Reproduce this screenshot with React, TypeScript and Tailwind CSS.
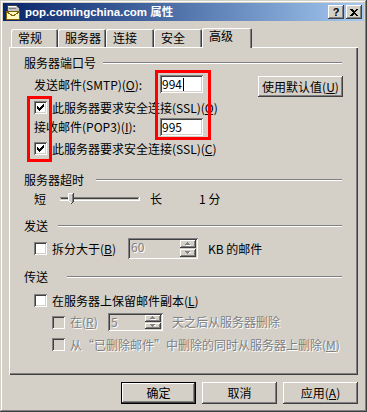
import React from 'react';

const raised =
  'shadow-[inset_-1px_-1px_#404040,inset_1px_1px_#ffffff,inset_-2px_-2px_#808080,inset_2px_2px_#d4d0c8]';
const sunken =
  'shadow-[inset_1px_1px_#808080,inset_-1px_-1px_#ffffff,inset_2px_2px_#404040,inset_-2px_-2px_#d4d0c8]';
const defaultRaised =
  'shadow-[inset_0_0_0_1px_#000000,inset_-2px_-2px_#404040,inset_2px_2px_#ffffff,inset_-3px_-3px_#808080]';
const grayText = 'text-[#808080] [text-shadow:1px_1px_0_#ffffff]';

// classic 7x7 check mark, row by row
const checkRows: [number, number, number][] = [
  [6, 0, 1],
  [5, 1, 2],
  [0, 2, 1],
  [4, 2, 3],
  [0, 3, 2],
  [3, 3, 3],
  [0, 4, 5],
  [1, 5, 3],
  [2, 6, 1],
];

function CheckBox({ checked = false, disabled = false }: { checked?: boolean; disabled?: boolean }) {
  return (
    <span
      className={`flex h-[13px] w-[13px] shrink-0 items-center justify-center ${
        disabled ? 'bg-[#d4d0c8]' : 'bg-white'
      } ${sunken}`}
    >
      {checked && (
        <svg width="7" height="7" viewBox="0 0 7 7" shapeRendering="crispEdges">
          {checkRows.map(([x, y, w], i) => (
            <rect key={i} x={x} y={y} width={w} height={1} fill="#000" />
          ))}
        </svg>
      )}
    </span>
  );
}

function Group({ title, className, line }: { title: string; className: string; line: string }) {
  return (
    <div className={`flex h-[12px] items-center ${className}`}>
      <span className="leading-[12px]">{title}</span>
      <div className={`h-[2px] flex-1 border-t border-b border-t-[#808080] border-b-white ${line}`} />
    </div>
  );
}

function Arrow({ down = false }: { down?: boolean }) {
  return (
    <svg width="6" height="4" viewBox="0 0 6 4" shapeRendering="crispEdges">
      {down ? (
        <>
          <rect x="1" y="1" width="5" height="1" fill="#fff" />
          <rect x="0" y="0" width="5" height="1" fill="#808080" />
          <rect x="1" y="1" width="3" height="1" fill="#808080" />
          <rect x="2" y="2" width="1" height="1" fill="#808080" />
        </>
      ) : (
        <>
          <rect x="2" y="0" width="1" height="1" fill="#808080" />
          <rect x="1" y="1" width="3" height="1" fill="#808080" />
          <rect x="0" y="2" width="5" height="1" fill="#808080" />
          <rect x="1" y="3" width="5" height="1" fill="#fff" />
        </>
      )}
    </svg>
  );
}

function Spin({ value, className }: { value: string; className: string }) {
  return (
    <div className={`flex shrink-0 bg-[#d4d0c8] p-[2px] ${sunken} ${className}`}>
      <span className={`flex-1 pl-[1px] leading-[14px] ${grayText}`}>{value}</span>
      <div className="flex w-[16px] flex-col gap-[1px]">
        <div className={`flex flex-1 items-center justify-center ${raised}`}>
          <Arrow />
        </div>
        <div className={`flex flex-1 items-center justify-center ${raised}`}>
          <Arrow down />
        </div>
      </div>
    </div>
  );
}

function Field({ children }: { children: React.ReactNode }) {
  return (
    <div className={`flex h-[18px] w-[43px] shrink-0 items-center bg-white pl-[2px] ${sunken}`}>
      <span className="leading-[12px]">{children}</span>
    </div>
  );
}

function Btn({
  children,
  className,
  isDefault = false,
}: {
  children: React.ReactNode;
  className: string;
  isDefault?: boolean;
}) {
  return (
    <div
      className={`flex shrink-0 items-center justify-center leading-[12px] ${
        isDefault ? defaultRaised : raised
      } ${className}`}
    >
      {children}
    </div>
  );
}

const tabs = ['常规', '服务器', '连接', '安全'];
const tabWidths = ['w-[47px]', 'w-[48px]', 'w-[48px]', 'w-[48px]'];

export default function App() {
  return (
    <div className="h-[412px] w-[367px] overflow-hidden bg-[#d4d0c8] p-[3px] text-[12px] text-black font-['Noto_Sans_CJK_SC',sans-serif] shadow-[inset_-1px_-1px_#404040,inset_1px_1px_#d4d0c8,inset_-2px_-2px_#808080,inset_2px_2px_#ffffff]">
      {/* title bar */}
      <div className="flex h-[18px] items-center bg-linear-to-r from-[#0a246a] to-[#a6caf0] pl-[2px] pr-[2px]">
        <svg width="16" height="16" viewBox="0 0 16 16" shapeRendering="crispEdges">
          <path d="M2 1h9l3 3v3H2z" fill="#c0c0c0" stroke="#404040" strokeWidth="1" />
          <rect x="3" y="2" width="8" height="1" fill="#fff" />
          <rect x="4" y="4" width="7" height="1" fill="#808080" />
          <rect x="1.5" y="7.5" width="13" height="8" fill="#fff8c0" stroke="#806000" />
          <path d="M2 8l6 4 6-4" fill="none" stroke="#806000" strokeWidth="1" />
        </svg>
        <span className="ml-[4px] text-[11.5px] font-bold leading-[14px] text-white font-['Liberation_Sans','Noto_Sans_CJK_SC',sans-serif]">
          pop.comingchina.com 属性
        </span>
        <div className="ml-auto flex gap-[2px]">
          <div className={`flex h-[14px] w-[16px] items-center justify-center bg-[#d4d0c8] ${raised}`}>
            <span className="text-[11px] font-bold leading-[11px] font-['Liberation_Sans',sans-serif]">?</span>
          </div>
          <div className={`flex h-[14px] w-[16px] items-center justify-center bg-[#d4d0c8] ${raised}`}>
            <svg width="8" height="7" viewBox="0 0 8 7" shapeRendering="crispEdges">
              <path d="M0 0h2l2 2 2-2h2L5 3.5 8 7H6L4 5 2 7H0l3-3.5z" fill="#000" />
            </svg>
          </div>
        </div>
      </div>

      <div className="px-[6px]">
        {/* tabs */}
        <div className="relative z-10 mt-[7px] flex h-[20px] items-end pl-[2px]">
          {tabs.map((t, i) => (
            <div
              key={t}
              className={`mb-[1px] h-[18px] rounded-t-[2px] pl-[7px] pt-[3px] leading-[12px] shadow-[inset_1px_1px_#ffffff,inset_-1px_0_#404040,inset_-2px_0_#808080] ${tabWidths[i]}`}
            >
              {t}
            </div>
          ))}
          <div className="h-[20px] w-[50px] rounded-t-[2px] bg-[#d4d0c8] pl-[7px] pt-[2px] leading-[12px] shadow-[inset_1px_1px_#ffffff,inset_-1px_0_#404040,inset_-2px_0_#808080]">
            高级
          </div>
        </div>

        {/* panel */}
        <div className="relative -mt-[1px] flex h-[328px] flex-col pl-[15px] pr-[16px] shadow-[inset_1px_1px_#ffffff,inset_-1px_-1px_#404040,inset_-2px_-2px_#808080]">
          <Group className="mt-[10px]" title="服务器端口号" line="ml-[7px]" />

          <div className="mt-[6px] flex h-[22px] items-start pl-[10px]">
            <span className="w-[126px] shrink-0 leading-[20px]">
              发送邮件(SMTP)(<u>O</u>):
            </span>
            <Field>
              994<span className="ml-[1px] inline-block h-[13px] w-[1px] align-[-2px] bg-black" />
            </Field>
            <Btn className="ml-[55px] mt-[1px] h-[21px] w-[85px]">
              使用默认值(<u>U</u>)
            </Btn>
          </div>

          <div className="mt-[4px] flex h-[13px] items-center pl-[10px]">
            <CheckBox checked />
            <span className="ml-[5px] leading-[12px]">
              此服务器要求安全连接(SSL)(<u>Q</u>)
            </span>
          </div>

          <div className="mt-[4px] flex h-[18px] items-start pl-[10px]">
            <span className="w-[126px] shrink-0 leading-[18px]">
              接收邮件(POP3)(<u>I</u>):
            </span>
            <Field>995</Field>
          </div>

          <div className="mt-[6px] flex h-[13px] items-center pl-[10px]">
            <CheckBox checked />
            <span className="ml-[5px] leading-[12px]">
              此服务器要求安全连接(SSL)(<u>C</u>)
            </span>
          </div>

          <Group className="mt-[19px]" title="服务器超时" line="ml-[12px]" />

          <div className="mt-[6px] flex h-[14px] items-center pl-[10px]">
            <span className="leading-[12px]">短</span>
            <svg className="ml-[14px]" width="80" height="14" viewBox="0 0 80 14" shapeRendering="crispEdges">
              <rect x="0" y="5" width="79" height="1" fill="#808080" />
              <rect x="1" y="6" width="77" height="1" fill="#404040" />
              <rect x="0" y="8" width="80" height="1" fill="#ffffff" />
              <rect x="79" y="5" width="1" height="4" fill="#ffffff" />
              <rect x="1" y="7" width="78" height="1" fill="#d4d0c8" />
              <path d="M8 1h6v8l-3 3-3-3z" fill="#d4d0c8" />
              <rect x="8" y="1" width="5" height="1" fill="#ffffff" />
              <rect x="8" y="1" width="1" height="8" fill="#ffffff" />
              <rect x="13" y="1" width="1" height="9" fill="#404040" />
              <rect x="12" y="2" width="1" height="8" fill="#808080" />
              <rect x="12" y="10" width="1" height="1" fill="#404040" />
              <rect x="11" y="11" width="1" height="1" fill="#404040" />
              <rect x="9" y="9" width="1" height="1" fill="#ffffff" />
              <rect x="10" y="10" width="1" height="1" fill="#ffffff" />
            </svg>
            <span className="ml-[10px] leading-[12px]">长</span>
            <span className="ml-[37px] leading-[12px]">1 分</span>
          </div>

          <Group className="mt-[14px]" title="发送" line="ml-[10px]" />

          <div className="mt-[6px] flex h-[21px] items-center pl-[10px]">
            <CheckBox />
            <span className="ml-[5px] w-[76px] shrink-0 leading-[12px]">
              拆分大于(<u>B</u>)
            </span>
            <Spin value="60" className="h-[21px] w-[70px]" />
            <span className="ml-[10px] leading-[12px]">KB 的邮件</span>
          </div>

          <Group className="mt-[12px]" title="传送" line="ml-[19px]" />

          <div className="mt-[11px] flex h-[13px] items-center pl-[10px]">
            <CheckBox />
            <span className="ml-[5px] leading-[12px]">
              在服务器上保留邮件副本(<u>L</u>)
            </span>
          </div>

          <div className="mt-[6px] flex h-[18px] items-center pl-[28px]">
            <CheckBox disabled />
            <span className={`ml-[5px] w-[38px] shrink-0 leading-[12px] ${grayText}`}>
              在(<u>R</u>)
            </span>
            <Spin value="5" className="h-[18px] w-[55px]" />
            <span className={`ml-[9px] leading-[12px] ${grayText}`}>天之后从服务器删除</span>
          </div>

          <div className="mt-[7px] flex h-[13px] items-center pl-[28px]">
            <CheckBox disabled />
            <span className={`ml-[5px] leading-[12px] ${grayText}`}>
              从“已删除邮件”中删除的同时从服务器上删除(<u>M</u>)
            </span>
          </div>

          {/* red highlight boxes drawn over the dialog */}
          <div className="pointer-events-none absolute left-[146px] top-[23px] h-[70px] w-[56px] border-[3px] border-[#ff0000]" />
          <div className="pointer-events-none absolute left-[18px] top-[49px] h-[66px] w-[25px] border-[3px] border-[#ff0000]" />
        </div>

        {/* bottom buttons */}
        <div className="mt-[7px] flex justify-end gap-[6px]">
          <Btn isDefault className="h-[22px] w-[75px]">
            确定
          </Btn>
          <Btn className="h-[22px] w-[75px]">取消</Btn>
          <Btn className="h-[22px] w-[75px]">
            应用(<u>A</u>)
          </Btn>
        </div>
      </div>
    </div>
  );
}
